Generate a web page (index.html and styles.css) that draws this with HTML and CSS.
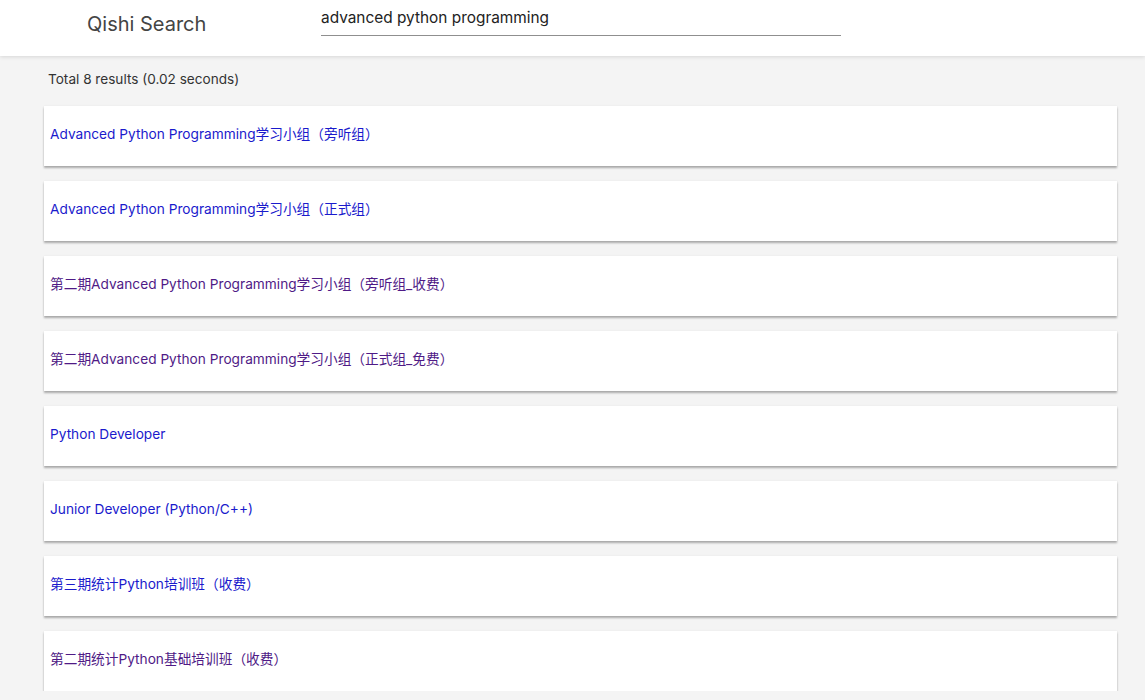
FILE: index.html
```html
<!DOCTYPE html>
<html>
<head>
<meta charset="utf-8">
<link rel="stylesheet" href="styles.css">
</head>
<body>
<header class="topbar">
  <div class="brand">Qishi Search</div>
  <div class="search">
    <input class="search-input" type="text" value="advanced python programming">
  </div>
</header>
<main class="results">
  <div class="stats">Total 8 results (0.02 seconds)</div>
  <div class="card"><a class="link" href="#">Advanced Python Programming学习小组（旁听组）</a></div>
  <div class="card"><a class="link" href="#">Advanced Python Programming学习小组（正式组）</a></div>
  <div class="card"><a class="link visited" href="#">第二期Advanced Python Programming学习小组（旁听组_收费）</a></div>
  <div class="card"><a class="link visited" href="#">第二期Advanced Python Programming学习小组（正式组_免费）</a></div>
  <div class="card"><a class="link" href="#">Python Developer</a></div>
  <div class="card"><a class="link" href="#">Junior Developer (Python/C++)</a></div>
  <div class="card"><a class="link" href="#">第三期统计Python培训班（收费）</a></div>
  <div class="card"><a class="link visited" href="#">第二期统计Python基础培训班（收费）</a></div>
</main>
</body>
</html>
```
FILE: styles.css
```css
* { box-sizing: border-box; }
html, body {
  margin: 0;
  padding: 0;
  background: #f4f4f4;
  font-family: Inter, "Noto Sans CJK SC", sans-serif;
}
.topbar {
  height: 56px;
  background: #fff;
  display: flex;
  align-items: flex-start;
  box-shadow: 0 1px 4px rgba(0,0,0,0.12);
  position: relative;
  z-index: 1;
}
.brand {
  width: 321px;
  padding-left: 87px;
  padding-top: 10px;
  font-size: 20px;
  color: #444;
  line-height: 28px;
}
.search {
  width: 520px;
  padding-top: 4px;
}
.search-input {
  width: 100%;
  border: none;
  border-bottom: 1px solid #8f8f8f;
  outline: none;
  font-family: Inter, sans-serif;
  font-size: 15.4px;
  color: #222;
  padding: 0;
  height: 32px;
  line-height: 24px;
  padding-bottom: 4px;
  background: transparent;
}
.results {
  padding: 14px 28px 0 44px;
  display: flex;
  flex-direction: column;
  gap: 15px;
}
.stats {
  font-size: 13.6px;
  color: #333;
  padding-left: 4px;
  line-height: 18px;
  margin-bottom: 3px;
}
.card {
  height: 60px;
  background: #fff;
  display: flex;
  align-items: center;
  padding-left: 6px;
  padding-bottom: 4px;
  box-shadow: 0 2px 2px rgba(0,0,0,0.3), 0 0 2px rgba(0,0,0,0.06);
}
.link {
  font-size: 13.7px;
  line-height: 18px;
  color: #1a1acc;
  text-decoration: none;
}
.link.visited { color: #4f1a86; }
```
